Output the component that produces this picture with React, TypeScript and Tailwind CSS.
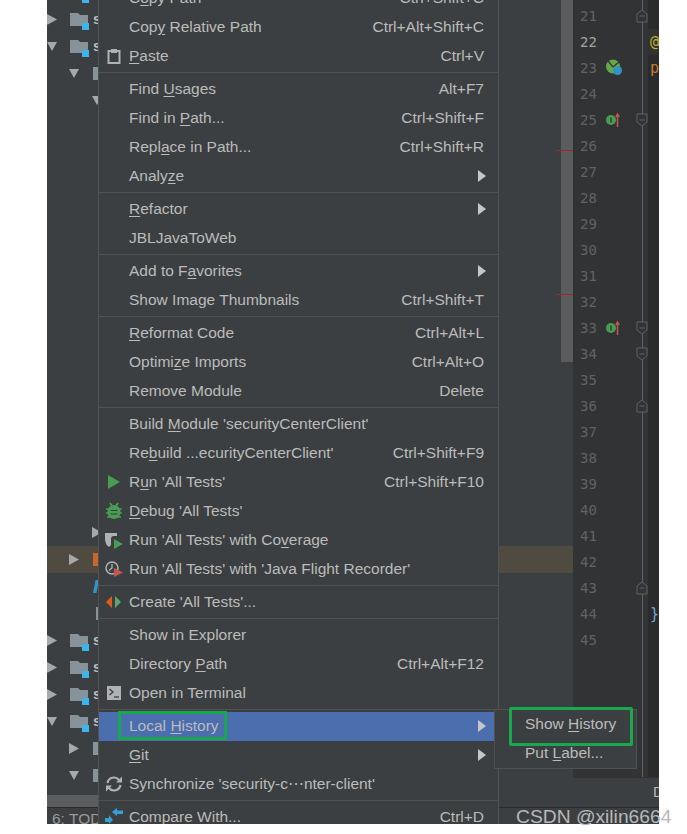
import React from 'react';

type MenuRow =
  | { sep: true }
  | { label: string; shortcut?: string; arrow?: boolean; icon?: React.ReactNode; active?: boolean };

const PasteIcon = () => (
  <svg width="16" height="18" viewBox="0 0 16 18" fill="none">
    <rect x="2.5" y="4" width="11" height="12" stroke="#afb1b3" strokeWidth="2" />
    <rect x="5" y="2" width="6" height="4" fill="#afb1b3" />
  </svg>
);

const RunIcon = () => (
  <svg width="16" height="16" viewBox="0 0 16 16">
    <path d="M2 1 L14 8 L2 15 Z" fill="#499c54" />
  </svg>
);

const DebugIcon = () => (
  <svg width="18" height="18" viewBox="0 0 18 18" fill="none">
    <path d="M5 1 L7 4 M13 1 L11 4" stroke="#499c54" strokeWidth="1.8" />
    <ellipse cx="9" cy="10" rx="6.5" ry="7" fill="#499c54" />
    <path d="M1 7 H17 M1 11 H17 M2 15 H16" stroke="#499c54" strokeWidth="1.6" />
    <path d="M5.5 8.5 H12.5 M5.5 12 H12.5" stroke="#3c3f41" strokeWidth="1.2" />
  </svg>
);

const CoverageIcon = () => (
  <svg width="20" height="18" viewBox="0 0 20 18">
    <path d="M1 2 H13 V5 H10 A3 3 0 0 0 7 8 V14 L5 16 Q1 13 1 8 Z" fill="#afb1b3" />
    <path d="M10 8 L19 13 L10 18 Z" fill="#499c54" />
  </svg>
);

const ProfilerIcon = () => (
  <svg width="20" height="18" viewBox="0 0 20 18" fill="none">
    <circle cx="8" cy="8" r="6" stroke="#afb1b3" strokeWidth="1.5" />
    <path d="M8 4 V8 L5 10.5" stroke="#afb1b3" strokeWidth="1.3" />
    <path d="M10 8 L19 12.5 L10 17 Z" fill="#c75450" />
  </svg>
);

const CreateTestIcon = () => (
  <svg width="18" height="14" viewBox="0 0 18 14">
    <path d="M7 1 V13 L1 7 Z" fill="#e05a1c" />
    <path d="M10 1 V13 L16 7 Z" fill="#59a869" />
  </svg>
);

const TerminalIcon = () => (
  <svg width="14" height="14" viewBox="0 0 14 14" fill="none">
    <rect width="14" height="14" fill="#afb1b3" />
    <path d="M2.5 3 L6 6 L2.5 9" stroke="#3c3f41" strokeWidth="1.3" />
    <path d="M7 11 H12" stroke="#3c3f41" strokeWidth="1.3" />
  </svg>
);

const SyncIcon = () => (
  <svg width="18" height="18" viewBox="0 0 18 18" fill="none">
    <path d="M2.5 8 A6.5 6.5 0 0 1 14 5" stroke="#afb1b3" strokeWidth="2.2" />
    <path d="M15.5 10 A6.5 6.5 0 0 1 4 13" stroke="#afb1b3" strokeWidth="2.2" />
    <path d="M11 7.5 H17 V1.5 Z" fill="#afb1b3" />
    <path d="M7 10.5 H1 V16.5 Z" fill="#afb1b3" />
  </svg>
);

const CompareIcon = () => (
  <svg width="18" height="18" viewBox="0 0 18 18">
    <path d="M7 4 L12 0 V2.5 H18 V6 H12 V8 Z" fill="#389fd6" />
    <path d="M8 12 L4 7 V10 H0 V14 H4 V16 Z" fill="#389fd6" />
  </svg>
);

const menuRows: MenuRow[] = [
  { label: 'C_opy Path', shortcut: 'Ctrl+Shift+C' },
  { label: 'Cop_y Relative Path', shortcut: 'Ctrl+Alt+Shift+C' },
  { label: '_Paste', shortcut: 'Ctrl+V', icon: <PasteIcon /> },
  { sep: true },
  { label: 'Find _Usages', shortcut: 'Alt+F7' },
  { label: 'Find in _Path...', shortcut: 'Ctrl+Shift+F' },
  { label: 'Repl_ace in Path...', shortcut: 'Ctrl+Shift+R' },
  { label: 'Analy_ze', arrow: true },
  { sep: true },
  { label: '_Refactor', arrow: true },
  { label: 'JBLJavaToWeb' },
  { sep: true },
  { label: 'Add to F_avorites', arrow: true },
  { label: 'Show Image Thumbnails', shortcut: 'Ctrl+Shift+T' },
  { sep: true },
  { label: '_Reformat Code', shortcut: 'Ctrl+Alt+L' },
  { label: 'Optimi_ze Imports', shortcut: 'Ctrl+Alt+O' },
  { label: 'Remove Module', shortcut: 'Delete' },
  { sep: true },
  { label: "Build _Module 'securityCenterClient'" },
  { label: "Re_build ...ecurityCenterClient'", shortcut: 'Ctrl+Shift+F9' },
  { label: "R_un 'All Tests'", shortcut: 'Ctrl+Shift+F10', icon: <RunIcon /> },
  { label: "_Debug 'All Tests'", icon: <DebugIcon /> },
  { label: "Run 'All Tests' with Co_verage", icon: <CoverageIcon /> },
  { label: "Run 'All Tests' with 'Java Flight Recorder'", icon: <ProfilerIcon /> },
  { sep: true },
  { label: "Create 'All Tests'...", icon: <CreateTestIcon /> },
  { sep: true },
  { label: 'Show in Explorer' },
  { label: 'Directory _Path', shortcut: 'Ctrl+Alt+F12' },
  { label: 'Open in Terminal', icon: <TerminalIcon /> },
  { sep: true },
  { label: 'Local _History', arrow: true, active: true },
  { label: '_Git', arrow: true },
  { label: "Synchronize 'security-c⋯nter-client'", icon: <SyncIcon /> },
  { sep: true },
  { label: 'Compare With...', shortcut: 'Ctrl+D', icon: <CompareIcon /> },
];

const Mnemonic: React.FC<{ text: string }> = ({ text }) => {
  const i = text.indexOf('_');
  if (i < 0) return <span>{text}</span>;
  return (
    <span>
      {text.slice(0, i)}
      <u className="underline-offset-2">{text[i + 1]}</u>
      {text.slice(i + 2)}
    </span>
  );
};

const Arrow = () => (
  <svg width="8" height="12" viewBox="0 0 8 12" className="mr-[12px]">
    <path d="M0 0 L8 6 L0 12 Z" fill="#c4c6c8" />
  </svg>
);

const ContextMenu = () => (
  <div className="absolute left-[51px] top-[-16px] w-[401px] h-[858px] overflow-hidden bg-[#3c3f41] border-x border-[#515151]">
    {menuRows.map((row, i) =>
      'sep' in row ? (
        <div key={i} className="h-[4px] pt-px">
          <div className="w-full h-px bg-[#515151]" />
        </div>
      ) : (
        <div
          key={i}
          className={`h-[29px] pb-[2px] flex items-center text-[15.5px] text-[#bbbbbb] ${row.active ? 'bg-[#4b6eaf]' : ''}`}
        >
          <div className="w-[30px] flex justify-center shrink-0">{row.icon}</div>
          <div className="flex-1 whitespace-nowrap">
            <Mnemonic text={row.label} />
          </div>
          {row.shortcut && <div className="mr-[14px] whitespace-nowrap">{row.shortcut}</div>}
          {row.arrow && <Arrow />}
        </div>
      ),
    )}
  </div>
);

const TreeArrow: React.FC<{ open?: boolean }> = ({ open }) => (
  <svg width="10" height="11" viewBox="0 0 10 11" className="shrink-0">
    <path d={open ? 'M0 1 H10 L5 10 Z' : 'M0 0 L10 5.5 L0 11 Z'} fill="#a8a8a8" />
  </svg>
);

const ModuleFolder = () => (
  <svg width="20" height="21" viewBox="0 0 20 21" className="shrink-0">
    <path d="M0 4 H8 L10 6 H18 V17 H0 Z" fill="#87939a" />
    <rect x="12" y="14" width="7" height="7" fill="#3db5ea" />
  </svg>
);

type TreeRow = {
  indent: number;
  open?: boolean;
  noArrow?: boolean;
  icon?: 'module' | 'folder' | 'orange' | 'java' | 'info';
  hi?: boolean;
};

const TreeLine: React.FC<{ row: TreeRow }> = ({ row }) => (
  <div className={`h-[27px] flex items-center ${row.hi ? 'bg-[#4f4b41]' : ''}`}>
    <div style={{ width: row.indent }} className="shrink-0" />
    {!row.noArrow && <TreeArrow open={row.open} />}
    {row.icon === 'module' && (
      <div className="ml-[13px] flex items-center">
        <ModuleFolder />
        <span className="ml-[3px] text-[15px] font-bold text-[#bbbbbb]">s</span>
      </div>
    )}
    {row.icon === 'folder' && <div className="ml-[14px] w-[6px] h-[13px] bg-[#87939a]" />}
    {row.icon === 'orange' && <div className="ml-[14px] w-[6px] h-[13px] bg-[#c9662c]" />}
    {row.icon === 'java' && (
      <svg width="6" height="13" viewBox="0 0 6 13" className="ml-[46px] shrink-0">
        <path d="M2.5 0 H6 L3.5 13 H0 Z" fill="#3592c4" />
      </svg>
    )}
    {row.icon === 'info' && <div className="ml-[49px] w-[3px] h-[13px] bg-[#87939a]" />}
  </div>
);

const topTree: TreeRow[] = [
  { indent: 0, icon: 'module' },
  { indent: 0, icon: 'module' },
  { indent: 0, open: true, icon: 'module' },
  { indent: 22, open: true, icon: 'folder' },
  { indent: 45, open: true },
];

const bottomTree: TreeRow[] = [
  { indent: 45 },
  { indent: 22, icon: 'orange', hi: true },
  { indent: 0, noArrow: true, icon: 'java' },
  { indent: 0, noArrow: true, icon: 'info' },
  { indent: 0, icon: 'module' },
  { indent: 0, icon: 'module' },
  { indent: 0, icon: 'module' },
  { indent: 0, open: true, icon: 'module' },
  { indent: 22, icon: 'folder' },
  { indent: 22, open: true, icon: 'folder' },
];

const FoldMark: React.FC<{ end?: boolean }> = ({ end }) => (
  <svg width="12" height="14" viewBox="0 0 12 14" fill="#313335" stroke="#606366" className="absolute left-[63px] top-[6px]">
    <path d={end ? 'M1 5 L6 1 L11 5 V13 H1 Z' : 'M1 1 H11 V9 L6 13 L1 9 Z'} />
    <path d="M3.5 7 H8.5" />
  </svg>
);

const ImplMark = () => (
  <svg width="20" height="18" viewBox="0 0 20 18" className="shrink-0">
    <circle cx="5" cy="9" r="5" fill="#499c54" />
    <rect x="4" y="6.5" width="2" height="5" fill="#2f5a32" />
    <path d="M11.5 16 V4" stroke="#c75450" strokeWidth="1.5" />
    <path d="M9 6 L11.5 1.5 L14 6 Z" fill="#c75450" />
  </svg>
);

const BeanMark = () => (
  <svg width="18" height="18" viewBox="0 0 18 18" className="shrink-0">
    <circle cx="7" cy="7.5" r="7" fill="#62a948" />
    <path d="M2 2 L7 8 L13 3" stroke="#313335" strokeWidth="1.2" fill="none" />
    <circle cx="11.5" cy="11.5" r="4.5" fill="#3592c4" />
  </svg>
);

const lineNumbers = Array.from({ length: 25 }, (_, i) => i + 21);
const foldStart = [25, 33, 34];
const foldEnd = [21, 36, 43];

const Gutter = () => (
  <div className="relative w-[75px] pt-[3px] bg-[#313335] font-['DejaVu_Sans_Mono',monospace] text-[14px]">
    <div className="absolute left-[69px] top-0 bottom-0 w-px bg-[#606366]" />
    {lineNumbers.map(n => (
      <div key={n} className="relative h-[26px] flex items-center pl-[7px]">
        <span className={`w-[26px] ${n === 22 ? 'text-[#a4a3a3]' : 'text-[#606366]'}`}>{n}</span>
        {n === 23 && <BeanMark />}
        {(n === 25 || n === 33) && <ImplMark />}
        {foldStart.includes(n) && <FoldMark />}
        {foldEnd.includes(n) && <FoldMark end />}
      </div>
    ))}
  </div>
);

const Editor = () => (
  <div className="w-[11px] pt-[3px] bg-[#2b2b2b] overflow-hidden font-['DejaVu_Sans_Mono',monospace] text-[15px]">
    {lineNumbers.map(n => (
      <div key={n} className={`h-[26px] flex items-center pl-[2px] ${n === 22 ? 'bg-[#323232]' : ''}`}>
        {n === 22 && <span className="text-[#bbb529]">@</span>}
        {n === 23 && <span className="text-[#cc7832]">p</span>}
        {n === 44 && <span className="text-[#6fa8dc]">{'}'}</span>}
      </div>
    ))}
  </div>
);

const App: React.FC = () => (
  <div className="w-[687px] h-[834px] overflow-hidden bg-white relative font-['Liberation_Sans',Arial,sans-serif]">
    <div className="ml-[47px] w-[612px] h-[824px] overflow-hidden flex flex-col bg-[#3c3f41] relative">
      <div className="h-[807px] flex shrink-0">
        <div className="relative w-[526px] overflow-hidden">
          <div className="mt-[-21px]">
            {topTree.map((row, i) => (
              <TreeLine key={i} row={row} />
            ))}
          </div>
          <div className="absolute left-0 right-0 top-[519px]">
            {bottomTree.map((row, i) => (
              <TreeLine key={i} row={row} />
            ))}
          </div>
          <div className="absolute left-[514px] top-0 w-[12px] h-[362px] bg-[#5a5c5e]" />
          <div className="absolute left-[508px] top-[150px] w-[18px] h-px bg-[#9e2927]" />
          <div className="absolute left-[508px] top-[294px] w-[18px] h-px bg-[#9e2927]" />
          <div className="absolute left-0 top-[795px] w-[52px] h-[12px] bg-[#5a5c5e]" />
        </div>
        <div className="w-[86px] flex flex-col">
          <div className="h-[777px] flex overflow-hidden">
            <Gutter />
            <Editor />
          </div>
          <div className="flex-1 border-t border-[#323232] flex items-center justify-end text-[15px] text-[#bbbbbb] overflow-hidden">
            <span className="w-[6px] overflow-hidden">D</span>
          </div>
        </div>
      </div>
      <div className="flex-1 border-t border-[#2b2b2b] pl-[5px] text-[15.5px] leading-[22px] text-[#999999] whitespace-nowrap">
        6: TODO
      </div>
      <ContextMenu />
      <div className="absolute left-[447px] top-[709px] w-[143px] h-[60px] bg-[#3c3f41] border border-[#515151] text-[15.5px] text-[#bbbbbb]">
        <div className="h-[29px] pb-[2px] flex items-center pl-[30px]">
          <Mnemonic text="Show _History" />
        </div>
        <div className="h-[29px] pb-[2px] flex items-center pl-[30px]">
          <Mnemonic text="Put _Label..." />
        </div>
      </div>
      <div className="absolute left-[71px] top-[711px] w-[109px] h-[29px] border-[3px] border-[#1aa84f]" />
      <div className="absolute left-[462px] top-[707px] w-[124px] h-[39px] border-[3px] border-[#1aa84f] rounded-[2px]" />
    </div>
    <div className="absolute left-[516px] top-[806px] text-[19.25px] leading-[22px] text-[#b8b8b8] whitespace-nowrap">
      CSDN @xilin6664
    </div>
  </div>
);

export default App;
